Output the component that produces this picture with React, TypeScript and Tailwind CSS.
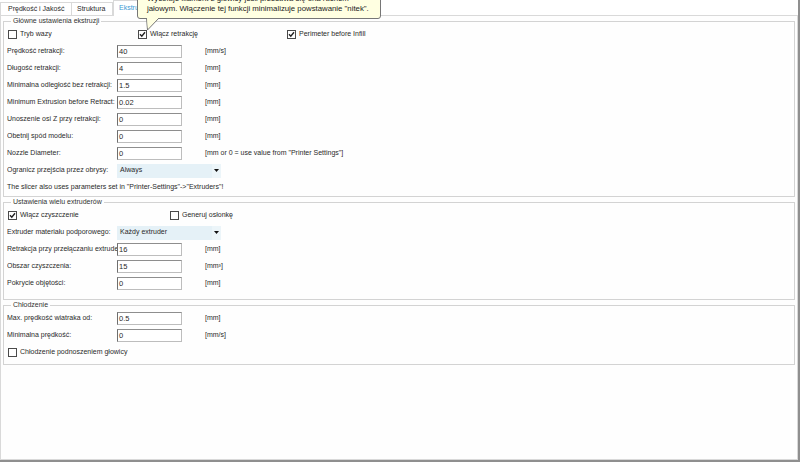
import React from "react";

const font = "font-['Liberation_Sans',Arial,sans-serif]";

function Check({ checked }: { checked?: boolean }) {
  return (
    <span className="w-[9px] h-[9px] border border-[#4a4a4a] bg-white flex items-center justify-center shrink-0">
      {checked && (
        <svg width="7" height="7" viewBox="0 0 7 7">
          <path d="M1 3.2 L2.8 5.2 L6 1.2" fill="none" stroke="#222" strokeWidth="1.4" />
        </svg>
      )}
    </span>
  );
}

function CheckItem({ label, checked, width }: { label: string; checked?: boolean; width?: string }) {
  return (
    <div className={`flex items-center gap-[3px] ${width ?? ""}`}>
      <Check checked={checked} />
      <span>{label}</span>
    </div>
  );
}

function Row({ label, value, unit }: { label: string; value: string; unit: string }) {
  return (
    <div className="flex items-center h-[17px]">
      <div className="w-[110px] overflow-hidden whitespace-nowrap">{label}</div>
      <div className="w-[65px] h-[13px] border border-[#bdbdbd] border-l-[#6e6e6e] border-t-[#8e8e8e] bg-white pl-[1px] leading-[11px] text-[7.5px]">
        {value}
      </div>
      <div className="ml-[23px] whitespace-nowrap">{unit}</div>
    </div>
  );
}

function SelectRow({ label, value }: { label: string; value: string }) {
  return (
    <div className="flex items-center h-[17px]">
      <div className="w-[110px] overflow-hidden whitespace-nowrap">{label}</div>
      <div className="w-[104px] h-[14px] bg-[#e5f1f7] flex items-center pl-[3px]">
        <span className="flex-1">{value}</span>
        <span className="w-[9px] h-full flex items-center justify-center bg-[#ecf5f9]">
          <svg width="5" height="3" viewBox="0 0 5 3">
            <path d="M0 0 H5 L2.5 3 Z" fill="#111" />
          </svg>
        </span>
      </div>
    </div>
  );
}

function Group({ title, children, className }: { title: string; children: React.ReactNode; className?: string }) {
  return (
    <fieldset className={`border border-[#d3d3d3] pl-[3px] min-w-0 ${className ?? ""}`}>
      <legend className="ml-[4px] px-[2px] leading-[10px] text-[#333]">{title}</legend>
      {children}
    </fieldset>
  );
}

export default function App() {
  return (
    <div className={`relative w-[800px] h-[462px] bg-white overflow-hidden text-[7px] text-[#2a2a2a] ${font}`}>
      <div className="h-[460px] border-r-2 border-r-[#8f8f8f] flex flex-col">
        {/* tabs */}
        <div className="h-[16px] flex items-end border-b border-[#d9d9d9] shrink-0">
          <div className="w-[72px] h-[13px] border border-b-0 border-[#d9d9d9] pl-[7px] flex items-center">
            Prędkość i Jakość
          </div>
          <div className="w-[41px] h-[13px] border border-l-0 border-b-0 border-[#d9d9d9] pl-[5px] flex items-center">
            Struktura
          </div>
          <div className="relative z-10 -mb-px w-[50px] h-[16px] border border-b-0 border-[#d9d9d9] bg-white pl-[5px] flex items-center text-[#3b9ad4]">
            Ekstruder
          </div>
        </div>

        {/* panel */}
        <div className="flex-1 border-l border-r border-b border-[#d9d9d9] px-[2px] bg-[#fefefe]">
          <Group title="Główne ustawienia ekstruzji">
            <div className="flex items-center h-[17px] pl-[1px]">
              <CheckItem label="Tryb wazy" width="w-[130px]" />
              <CheckItem label="Włącz retrakcję" checked width="w-[149px]" />
              <CheckItem label="Perimeter before Infill" checked />
            </div>
            <Row label="Prędkość retrakcji:" value="40" unit="[mm/s]" />
            <Row label="Długość retrakcji:" value="4" unit="[mm]" />
            <Row label="Minimalna odległość bez retrakcji:" value="1.5" unit="[mm]" />
            <Row label="Minimum Extrusion before Retract:" value="0.02" unit="[mm]" />
            <Row label="Unoszenie osi Z przy retrakcji:" value="0" unit="[mm]" />
            <Row label="Obetnij spód modelu:" value="0" unit="[mm]" />
            <Row label="Nozzle Diameter:" value="0" unit={'[mm or 0 = use value from "Printer Settings"]'} />
            <SelectRow label="Ogranicz przejścia przez obrysy:" value="Always" />
            <div className="h-[17px] flex items-center">
              The slicer also uses parameters set in "Printer-Settings"-&gt;"Extruders"!
            </div>
          </Group>

          <Group title="Ustawienia wielu extruderów" className="pb-[7px]">
            <div className="flex items-center h-[17px] pl-[1px]">
              <CheckItem label="Włącz czyszczenie" checked width="w-[162px]" />
              <CheckItem label="Generuj osłonkę" />
            </div>
            <SelectRow label="Extruder materiału podporowego:" value="Każdy extruder" />
            <Row label="Retrakcja przy przełączaniu extruderów:" value="16" unit="[mm]" />
            <Row label="Obszar czyszczenia:" value="15" unit="[mm³]" />
            <Row label="Pokrycie objętości:" value="0" unit="[mm]" />
          </Group>

          <Group title="Chłodzenie" className="pb-[3px]">
            <Row label="Max. prędkość wiatraka od:" value="0.5" unit="[mm]" />
            <Row label="Minimalna prędkość:" value="0" unit="[mm/s]" />
            <div className="flex items-center h-[17px] pl-[1px]">
              <CheckItem label="Chłodzenie podnoszeniem głowicy" />
            </div>
          </Group>
        </div>
      </div>
      <div className="h-[2px] bg-[#8f8f8f]" />

      {/* tooltip */}
      <div className="absolute left-[137px] top-[-12px] z-20">
        <div className="w-[244px] h-[31px] bg-[#ffffe1] border border-[#767676] rounded-[3px] pl-[9px] pt-[5px] text-[7.8px] leading-[10px] text-[#222] whitespace-nowrap">
          <div>Wycofuje filament z głowicy jeśli przesuwa się ona ruchem</div>
          <div>jałowym. Włączenie tej funkcji minimalizuje powstawanie "nitek".</div>
        </div>
        <svg className="absolute left-[9px] top-[30px]" width="16" height="13" viewBox="0 0 16 13">
          <path d="M0.5 0 L1.5 12 L13 0" fill="#ffffe1" stroke="#767676" strokeWidth="1" />
          <path d="M1.2 -0.5 L12 -0.5 L1.8 10 Z" fill="#ffffe1" />
        </svg>
      </div>
    </div>
  );
}
